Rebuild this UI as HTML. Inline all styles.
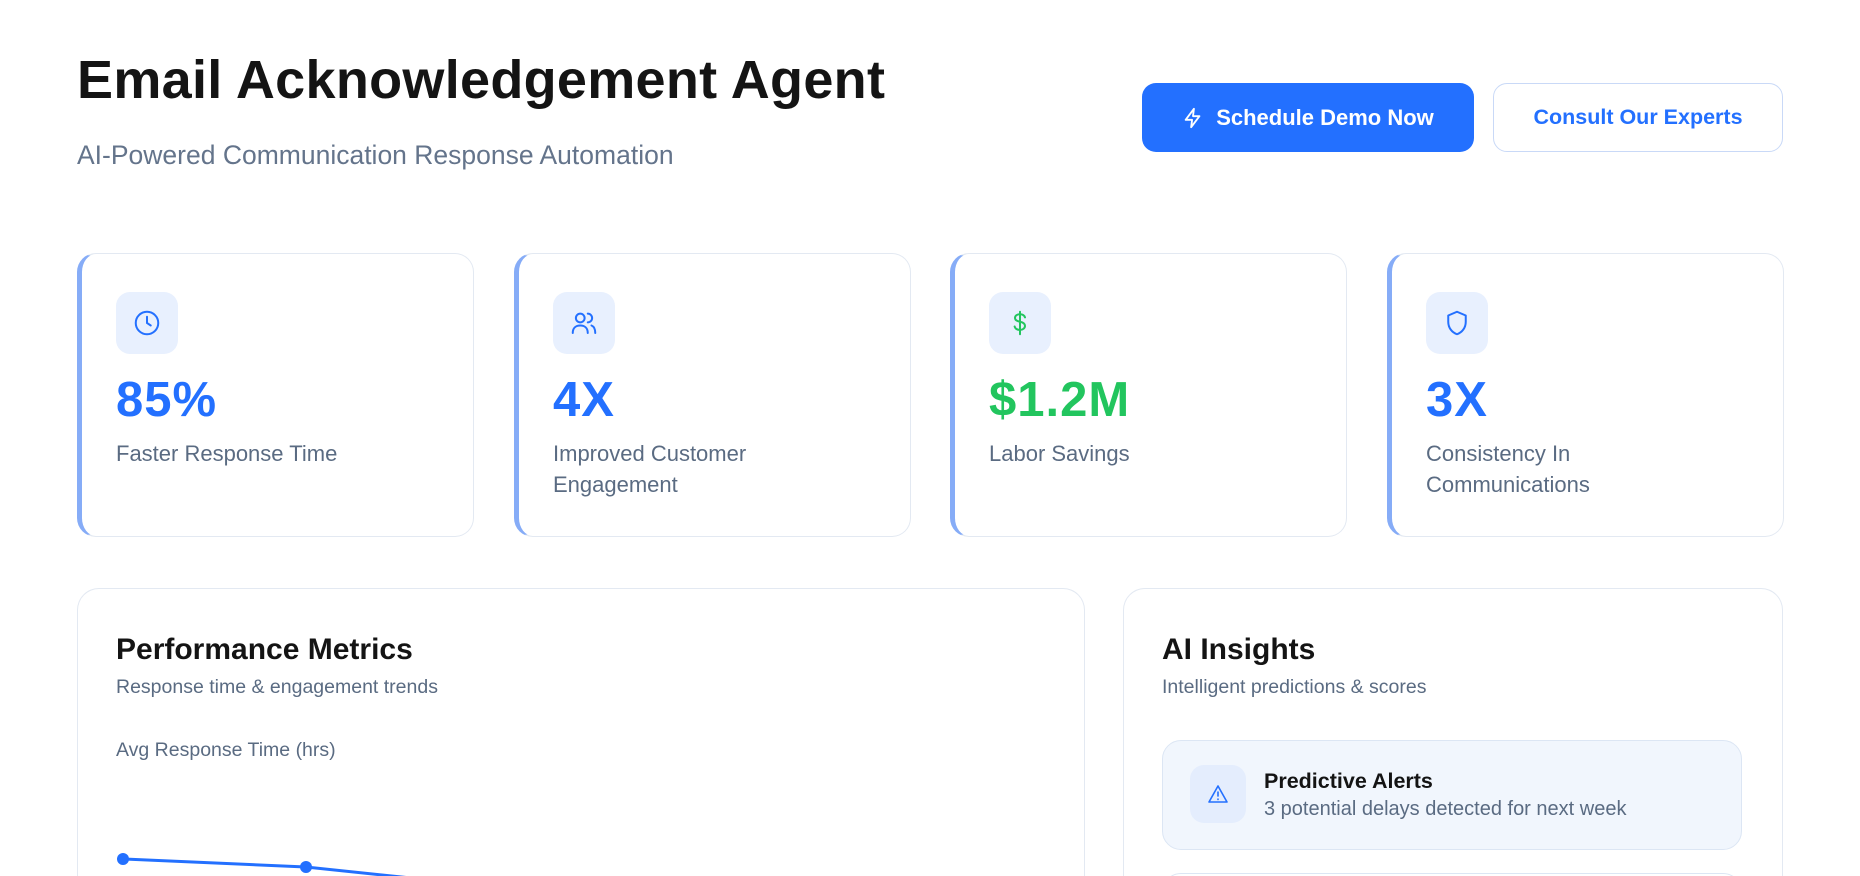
<!DOCTYPE html>
<html><head><meta charset="utf-8"><style>
*{margin:0;padding:0;box-sizing:border-box}
html,body{width:1860px;height:876px;overflow:hidden;background:#fff}
body{font-family:"Liberation Sans",sans-serif}
#w{position:relative;width:1860px;height:876px;overflow:hidden}
.abs{position:absolute}
h1{position:absolute;left:77px;top:49px;font-size:54px;font-weight:700;color:#141414;letter-spacing:0.3px;white-space:nowrap}
.sub{left:77px;top:140px;font-size:26.5px;color:#64748b}
.btn1{left:1142px;top:83px;width:332px;height:69px;background:#2370ff;border-radius:14px;color:#fff;font-weight:700;font-size:22px;display:flex;align-items:center;justify-content:center;gap:12px}
.btn2{left:1493px;top:83px;width:290px;height:69px;border:1.5px solid #c9d9f7;border-radius:14px;color:#2370ff;font-weight:700;font-size:21.5px;display:flex;align-items:center;justify-content:center}
.card{top:253px;width:397px;height:284px;border:1.5px solid #e3e9f2;border-left:5px solid #86acf7;border-radius:19px;background:#fff}
.ib{position:absolute;left:34px;top:38px;width:62px;height:62px;border-radius:14px;background:#e8f0fe;display:flex;align-items:center;justify-content:center}
.num{position:absolute;left:34px;top:118px;font-size:49px;font-weight:700;color:#2370ff;letter-spacing:1px}
.lbl{position:absolute;left:34px;top:184px;font-size:22px;color:#5a6b82;line-height:31px;width:340px}
.panel{top:588px;height:288px;border:1.5px solid #e3e9f2;border-bottom:none;border-radius:22px 22px 0 0;background:#fff;overflow:hidden}
.pt{position:absolute;left:38px;top:44px;font-size:30px;font-weight:700;color:#141414}
.ps{position:absolute;left:38px;top:87px;font-size:19.5px;color:#5a6b82}
</style></head><body><div id="w">
<h1>Email Acknowledgement Agent</h1>
<div class="abs sub">AI-Powered Communication Response Automation</div>
<div class="abs btn1"><svg width="22" height="22" viewBox="0 0 24 24" fill="none" stroke="#fff" stroke-width="2" stroke-linejoin="round"><path d="M13 2L4 14h7l-1 8 9-12h-7l1-8z"/></svg>Schedule Demo Now</div>
<div class="abs btn2">Consult Our Experts</div>

<div class="abs card" style="left:77px"><div class="ib"><svg width="30" height="30" viewBox="0 0 24 24" fill="none" stroke="#2370ff" stroke-width="1.6" stroke-linecap="round"><circle cx="12" cy="12" r="9"/><path d="M12 7v5l3 2"/></svg></div><div class="num">85%</div><div class="lbl">Faster Response Time</div></div>
<div class="abs card" style="left:514px"><div class="ib"><svg width="30" height="30" viewBox="0 0 24 24" fill="none" stroke="#2370ff" stroke-width="1.6" stroke-linecap="round"><circle cx="9" cy="8" r="3.5"/><path d="M3 20c0-4 2.5-6 6-6s6 2 6 6"/><path d="M15 4.5a3.5 3.5 0 010 7M18 14c2 .8 3 2.8 3 6"/></svg></div><div class="num">4X</div><div class="lbl">Improved Customer<br>Engagement</div></div>
<div class="abs card" style="left:950px"><div class="ib"><svg width="30" height="30" viewBox="0 0 24 24" fill="none" stroke="#22c55e" stroke-width="1.6" stroke-linecap="round"><path d="M12 3v18M16 7.5c-.5-1.5-2-2.5-4-2.5-2.5 0-4 1.3-4 3s1.5 2.5 4 3 4 1.5 4 3.3-1.7 3.2-4 3.2c-2.2 0-3.8-1-4.3-2.7"/></svg></div><div class="num" style="color:#22c55e">$1.2M</div><div class="lbl">Labor Savings</div></div>
<div class="abs card" style="left:1387px"><div class="ib"><svg width="30" height="30" viewBox="0 0 24 24" fill="none" stroke="#2370ff" stroke-width="1.6" stroke-linejoin="round"><path d="M12 3l7 3v5c0 5-3 8.5-7 10-4-1.5-7-5-7-10V6l7-3z"/></svg></div><div class="num">3X</div><div class="lbl">Consistency In<br>Communications</div></div>

<div class="abs panel" style="left:77px;width:1008px">
<div class="pt">Performance Metrics</div><div class="ps">Response time &amp; engagement trends</div>
<div class="ps" style="top:150px">Avg Response Time (hrs)</div>
</div>
<svg class="abs" style="left:0;top:0" width="1860" height="876"><polyline points="123,859 306,867 430,880" fill="none" stroke="#2370ff" stroke-width="3"/><circle cx="123" cy="859" r="6" fill="#2370ff"/><circle cx="306" cy="867" r="6" fill="#2370ff"/></svg>

<div class="abs panel" style="left:1123px;width:660px">
<div class="pt">AI Insights</div><div class="ps">Intelligent predictions &amp; scores</div>
<div style="position:absolute;left:38px;top:151px;width:580px;height:110px;background:#f1f6fd;border:1.5px solid #dce6f4;border-radius:19px">
<div style="position:absolute;left:27px;top:24px;width:56px;height:58px;border-radius:14px;background:#e4edfd;display:flex;align-items:center;justify-content:center"><svg width="24" height="24" viewBox="0 0 24 24" fill="none" stroke="#2370ff" stroke-width="1.6" stroke-linejoin="round" stroke-linecap="round"><path d="M12 4L3 20h18L12 4z"/><path d="M12 10v4M12 17v.5"/></svg></div>
<div style="position:absolute;left:101px;top:28px;font-size:21.5px;font-weight:700;color:#141414">Predictive Alerts</div>
<div style="position:absolute;left:101px;top:57px;font-size:20px;color:#5a6b82">3 potential delays detected for next week</div>
</div>
<div style="position:absolute;left:38px;top:284px;width:580px;height:60px;border:1.5px solid #dce6f4;border-radius:19px"></div>
</div>
</div></body></html>
